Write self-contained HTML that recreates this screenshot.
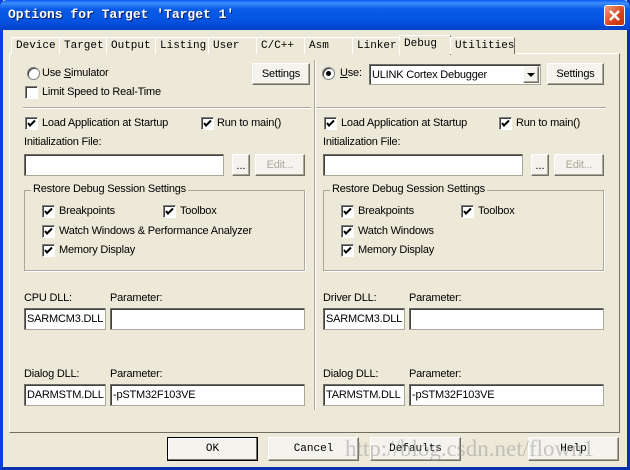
<!DOCTYPE html>
<html><head><style>
*{margin:0;padding:0;box-sizing:border-box}
body{width:630px;height:470px;overflow:hidden;background:#0A246A;font-family:"Liberation Sans",Arial,sans-serif;font-size:11px;color:#000;position:relative}
.a{position:absolute}
.win{left:0;top:0;width:630px;height:470px;background:#ECE9D8;border:3px solid #0842D8;border-top:none;border-right-color:#0831B0;border-bottom-color:#0831B0}
.title{left:0;top:0;width:630px;height:30px;background:linear-gradient(#0A5CF5 0%,#3E8DF9 10%,#0A5CE8 30%,#0453E0 70%,#0340C8 100%);border-radius:7px 7px 0 0}
.tt{left:8px;top:7px;color:#fff;font-family:"Liberation Mono",monospace;font-weight:bold;font-size:13px;text-shadow:1px 1px #0A1E6A}
.close{left:604px;top:5px;width:21px;height:21px;background:linear-gradient(135deg,#F0A080,#D8421A 60%,#C0300F);border:1px solid #fff;border-radius:3px}
.t{white-space:nowrap;line-height:13px}
.tab{top:37px;height:17px;border:1px solid #fff;border-right:1px solid #716F64;border-bottom:none;font-family:"Liberation Mono",monospace;font-size:11px;padding:2px 0 0 4px;background:#ECE9D8}
.panel{left:9px;top:53px;width:611px;height:380px;border:1px solid #fff;border-right-color:#716F64;border-bottom-color:#716F64}
.btn{background:#F4F3EE;border:1px solid #fff;border-right-color:#716F64;border-bottom-color:#716F64;box-shadow:inset -1px -1px #ACA899;text-align:center;white-space:nowrap}
.in{background:#fff;border:1px solid #ACA899;border-top-color:#716F64;border-left-color:#716F64;box-shadow:inset 1px 1px #404040;padding:4px 0 0 2px;font-size:11px;letter-spacing:-0.2px;white-space:nowrap;overflow:hidden}
.cb{width:13px;height:13px;background:#fff;border:1px solid #808080;border-right-color:#fff;border-bottom-color:#fff;box-shadow:inset 1px 1px #404040}
.cb svg{position:absolute;left:1px;top:1px}
.rd{width:13px;height:13px;border-radius:50%;background:#fff;border:1px solid #808080;box-shadow:inset 1px 1px #404040}
.grp{border:1px solid #ACA899;box-shadow:1px 1px #fff}
.sep{height:2px;border-top:1px solid #ACA899;border-bottom:1px solid #fff}
.lbl{font-size:11px;letter-spacing:-0.2px}
</style></head><body>
<div class="a win"></div>
<div class="a title"></div>
<div class="a tt">Options for Target 'Target 1'</div>
<div class="a close"><svg width="19" height="19"><path d="M5 5L14 14M14 5L5 14" stroke="#fff" stroke-width="2.5"/></svg></div>

<div class="a panel"></div>
<div class="a tab" style="left:11px;width:49px">Device</div>
<div class="a tab" style="left:59px;width:48px">Target</div>
<div class="a tab" style="left:106px;width:50px">Output</div>
<div class="a tab" style="left:155px;width:54px">Listing</div>
<div class="a tab" style="left:208px;width:49px">User</div>
<div class="a tab" style="left:256px;width:49px">C/C++</div>
<div class="a tab" style="left:304px;width:49px">Asm</div>
<div class="a tab" style="left:352px;width:49px">Linker</div>
<div class="a tab" style="left:399px;top:35px;height:20px;width:52px;border-bottom:none">Debug</div>
<div class="a tab" style="left:450px;width:65px">Utilities</div>

<div class="a" style="left:314px;top:60px;width:2px;height:350px;border-left:1px solid #ACA899;border-right:1px solid #fff"></div>

<!-- LEFT -->
<div class="a rd" style="left:27px;top:67px"></div>
<div class="a t lbl" style="left:42px;top:67px">Use <u>S</u>imulator</div>
<div class="a btn lbl" style="left:252px;top:63px;width:58px;height:22px;padding-top:4px">Settings</div>
<div class="a cb" style="left:25px;top:86px"></div>
<div class="a t lbl" style="left:42px;top:86px">Limit Speed to Real-Time</div>
<div class="a sep" style="left:23px;top:107px;width:288px"></div>

<div class="a cb" style="left:25px;top:117px"><svg width="9" height="9"><path d="M1 4L3 6.5L8 1.5" stroke="#000" stroke-width="2" fill="none"/></svg></div>
<div class="a t lbl" style="left:42px;top:117px">Load Application at Startup</div>
<div class="a cb" style="left:201px;top:117px"><svg width="9" height="9"><path d="M1 4L3 6.5L8 1.5" stroke="#000" stroke-width="2" fill="none"/></svg></div>
<div class="a t lbl" style="left:217px;top:117px">Run to main()</div>
<div class="a t lbl" style="left:24px;top:136px">Initialization File:</div>
<div class="a in" style="left:24px;top:154px;width:200px;height:22px"></div>
<div class="a btn" style="left:232px;top:154px;width:18px;height:22px;padding-top:5px">...</div>
<div class="a btn lbl" style="left:255px;top:154px;width:50px;height:22px;padding-top:4px;color:#ACA899">Edit...</div>

<div class="a grp" style="left:24px;top:190px;width:281px;height:81px"></div>
<div class="a t lbl" style="left:31px;top:183px;background:#ECE9D8;padding:0 2px">Restore Debug Session Settings</div>
<div class="a cb" style="left:42px;top:205px"><svg width="9" height="9"><path d="M1 4L3 6.5L8 1.5" stroke="#000" stroke-width="2" fill="none"/></svg></div>
<div class="a t lbl" style="left:59px;top:205px">Breakpoints</div>
<div class="a cb" style="left:163px;top:205px"><svg width="9" height="9"><path d="M1 4L3 6.5L8 1.5" stroke="#000" stroke-width="2" fill="none"/></svg></div>
<div class="a t lbl" style="left:180px;top:205px">Toolbox</div>
<div class="a cb" style="left:42px;top:225px"><svg width="9" height="9"><path d="M1 4L3 6.5L8 1.5" stroke="#000" stroke-width="2" fill="none"/></svg></div>
<div class="a t lbl" style="left:59px;top:225px">Watch Windows &amp; Performance Analyzer</div>
<div class="a cb" style="left:42px;top:244px"><svg width="9" height="9"><path d="M1 4L3 6.5L8 1.5" stroke="#000" stroke-width="2" fill="none"/></svg></div>
<div class="a t lbl" style="left:59px;top:244px">Memory Display</div>

<div class="a t lbl" style="left:24px;top:292px">CPU DLL:</div>
<div class="a t lbl" style="left:110px;top:292px">Parameter:</div>
<div class="a in" style="left:24px;top:308px;width:82px;height:22px">SARMCM3.DLL</div>
<div class="a in" style="left:110px;top:308px;width:195px;height:22px"></div>
<div class="a t lbl" style="left:24px;top:368px">Dialog DLL:</div>
<div class="a t lbl" style="left:110px;top:368px">Parameter:</div>
<div class="a in" style="left:24px;top:384px;width:82px;height:22px">DARMSTM.DLL</div>
<div class="a in" style="left:110px;top:384px;width:195px;height:22px">-pSTM32F103VE</div>

<!-- RIGHT -->
<div class="a rd" style="left:322px;top:67px"><div class="a" style="left:3px;top:3px;width:5px;height:5px;border-radius:50%;background:#000"></div></div>
<div class="a t lbl" style="left:340px;top:67px"><u>U</u>se:</div>
<div class="a in" style="left:369px;top:64px;width:172px;height:21px;padding-top:4px">ULINK Cortex Debugger</div>
<div class="a btn" style="left:523px;top:66px;width:16px;height:17px"><svg width="14" height="15"><path d="M3 6L11 6L7 10Z" fill="#000"/></svg></div>
<div class="a btn lbl" style="left:547px;top:63px;width:57px;height:22px;padding-top:4px">Settings</div>
<div class="a sep" style="left:316px;top:107px;width:290px"></div>

<div class="a cb" style="left:324px;top:117px"><svg width="9" height="9"><path d="M1 4L3 6.5L8 1.5" stroke="#000" stroke-width="2" fill="none"/></svg></div>
<div class="a t lbl" style="left:341px;top:117px">Load Application at Startup</div>
<div class="a cb" style="left:499px;top:117px"><svg width="9" height="9"><path d="M1 4L3 6.5L8 1.5" stroke="#000" stroke-width="2" fill="none"/></svg></div>
<div class="a t lbl" style="left:516px;top:117px">Run to main()</div>
<div class="a t lbl" style="left:323px;top:136px">Initialization File:</div>
<div class="a in" style="left:323px;top:154px;width:200px;height:22px"></div>
<div class="a btn" style="left:531px;top:154px;width:18px;height:22px;padding-top:5px">...</div>
<div class="a btn lbl" style="left:554px;top:154px;width:50px;height:22px;padding-top:4px;color:#ACA899">Edit...</div>

<div class="a grp" style="left:323px;top:190px;width:281px;height:81px"></div>
<div class="a t lbl" style="left:330px;top:183px;background:#ECE9D8;padding:0 2px">Restore Debug Session Settings</div>
<div class="a cb" style="left:341px;top:205px"><svg width="9" height="9"><path d="M1 4L3 6.5L8 1.5" stroke="#000" stroke-width="2" fill="none"/></svg></div>
<div class="a t lbl" style="left:358px;top:205px">Breakpoints</div>
<div class="a cb" style="left:461px;top:205px"><svg width="9" height="9"><path d="M1 4L3 6.5L8 1.5" stroke="#000" stroke-width="2" fill="none"/></svg></div>
<div class="a t lbl" style="left:478px;top:205px">Toolbox</div>
<div class="a cb" style="left:341px;top:225px"><svg width="9" height="9"><path d="M1 4L3 6.5L8 1.5" stroke="#000" stroke-width="2" fill="none"/></svg></div>
<div class="a t lbl" style="left:358px;top:225px">Watch Windows</div>
<div class="a cb" style="left:341px;top:244px"><svg width="9" height="9"><path d="M1 4L3 6.5L8 1.5" stroke="#000" stroke-width="2" fill="none"/></svg></div>
<div class="a t lbl" style="left:358px;top:244px">Memory Display</div>

<div class="a t lbl" style="left:323px;top:292px">Driver DLL:</div>
<div class="a t lbl" style="left:409px;top:292px">Parameter:</div>
<div class="a in" style="left:323px;top:308px;width:82px;height:22px">SARMCM3.DLL</div>
<div class="a in" style="left:409px;top:308px;width:195px;height:22px"></div>
<div class="a t lbl" style="left:323px;top:368px">Dialog DLL:</div>
<div class="a t lbl" style="left:409px;top:368px">Parameter:</div>
<div class="a in" style="left:323px;top:384px;width:82px;height:22px">TARMSTM.DLL</div>
<div class="a in" style="left:409px;top:384px;width:195px;height:22px">-pSTM32F103VE</div>

<!-- buttons -->
<div class="a btn" style="left:167px;top:437px;width:91px;height:24px;padding-top:5px;font-family:'Liberation Mono',monospace;border:1px solid #000;box-shadow:inset -1px -1px #716F64,inset 1px 1px #fff">OK</div>
<div class="a btn" style="left:268px;top:437px;width:91px;height:24px;padding-top:5px;font-family:'Liberation Mono',monospace">Cancel</div>
<div class="a btn" style="left:370px;top:437px;width:91px;height:24px;padding-top:5px;font-family:'Liberation Mono',monospace">Defaults</div>
<div class="a btn" style="left:528px;top:437px;width:91px;height:24px;padding-top:5px;font-family:'Liberation Mono',monospace">Help</div>
<div class="a t" style="left:345px;top:437px;font-family:'Liberation Serif',serif;font-size:23px;line-height:24px;color:rgba(150,150,150,0.5)">http://blog.csdn.net/flown1</div>
</body></html>
